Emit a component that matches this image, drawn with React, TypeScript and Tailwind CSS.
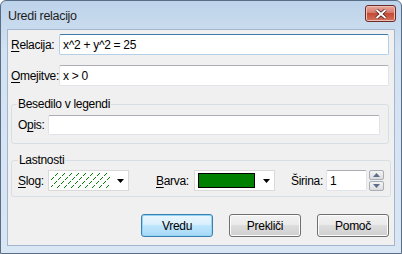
import React from 'react';

function TextBox({ value, focused, className }: { value?: string; focused?: boolean; className?: string }) {
  return (
    <div
      className={`bg-white border rounded-[2px] pl-[3px] flex items-center ${
        focused ? 'border-[#b5cfe7] border-t-[#3d7bad]' : 'border-[#e2e3ea] border-t-[#abadb3]'
      } ${className ?? ''}`}
    >
      <span className="leading-none">{value}</span>
    </div>
  );
}

function Arrow() {
  return (
    <svg width="7" height="4" viewBox="0 0 7 4" className="shrink-0">
      <path d="M0 0H7L3.5 4Z" fill="#000" />
    </svg>
  );
}

// diagonal hatch drawn pixel by pixel so it stays crisp
function Hatch() {
  const dots = [];
  for (let start = -16; start < 59; start += 7) {
    for (let y = 0; y < 16; y++) {
      const x = start + (15 - y);
      if (x < 0 || x >= 59) continue;
      if (y % 4 === 3) continue;
      dots.push(<rect key={`${start}-${y}`} x={x} y={y} width="1" height="1" fill="#008000" />);
    }
  }
  return (
    <svg width="59" height="16" viewBox="0 0 59 16" shapeRendering="crispEdges">
      {dots}
    </svg>
  );
}

function Button({ label, primary }: { label: string; primary?: boolean }) {
  return (
    <div
      className={`w-[72px] h-[23px] rounded-[3px] border flex items-center justify-center ${
        primary
          ? 'border-[#3c7fb1] bg-[linear-gradient(#eaf6fd_0%,#d9f0fc_45%,#bee6fd_50%,#a7d9f5_100%)] shadow-[inset_0_0_0_1px_#8fd5f5]'
          : 'border-[#707070] bg-[linear-gradient(#f2f2f2_0%,#ebebeb_45%,#dddddd_50%,#cfcfcf_100%)] shadow-[inset_0_0_0_1px_#fcfcfc]'
      }`}
    >
      {label}
    </div>
  );
}

function Label({ hot, rest, className }: { hot: string; rest: string; className?: string }) {
  return (
    <span className={className}>
      <span className="underline underline-offset-[2px]">{hot}</span>
      {rest}
    </span>
  );
}

export default function App() {
  return (
    <div className="w-[402px] h-[254px] font-['Liberation_Sans',Arial,sans-serif] text-[12px] tracking-[-0.3px] text-black">
      <div className="w-full h-full flex flex-col rounded-t-[6px] border border-[#5a6d86] bg-[linear-gradient(#bdd3ea,#d3e2f2_20%,#d9e6f4)]">
        <div className="h-[28px] flex items-start shrink-0">
          <span className="ml-[7px] mt-[6px] text-[12.5px] text-[#1e1e1e]">Uredi relacijo</span>
          <div className="ml-auto mr-[5px] mt-[4px] w-[31px] h-[17px] rounded-[3px] border border-[#6b2a2a] bg-[linear-gradient(#e8a89c,#d47a6c_45%,#c44a35_50%,#d2735c)] flex items-center justify-center shadow-[inset_0_0_0_1px_#f0c0b4]">
            <svg width="12" height="10" viewBox="0 0 12 10">
              <path d="M1.5 1L10.5 9M10.5 1L1.5 9" stroke="#4a1a1a" strokeWidth="3.4" />
              <path d="M1.5 1L10.5 9M10.5 1L1.5 9" stroke="#fff" strokeWidth="1.8" />
            </svg>
          </div>
        </div>
        <div className="flex-1 mx-[6px] mb-[7px] bg-[#f0f0f0] border border-[#a3b6cd] flex flex-col pl-[3px] pr-[5px] pt-[4px]">
          <div className="flex items-center h-[21px]">
            <Label hot="R" rest="elacija:" className="w-[48px]" />
            <TextBox value="x^2 + y^2 = 25" focused className="flex-1 h-[21px]" />
          </div>
          <div className="flex items-center h-[21px] mt-[10px]">
            <Label hot="O" rest="mejitve:" className="w-[48px]" />
            <TextBox value="x > 0" className="flex-1 h-[21px]" />
          </div>
          <fieldset className="mt-[11px] border border-[#d5dfe5] rounded-[3px] pl-[5px] pr-[8px] pt-[4px] pb-[8px]">
            <legend className="px-[1px] leading-[14px]">Besedilo v legendi</legend>
            <div className="flex items-center h-[20px]">
              <span className="w-[30px] ml-[1px]">
                O<span className="underline underline-offset-[2px]">p</span>is:
              </span>
              <TextBox className="flex-1 h-[20px]" />
            </div>
          </fieldset>
          <fieldset className="mt-[9px] border border-[#d5dfe5] rounded-[3px] pl-[6px] pr-[6px] pt-[3px] pb-[5px]">
            <legend className="px-[1px] leading-[14px]">Lastnosti</legend>
            <div className="flex items-center h-[21px]">
              <Label hot="S" rest="log:" className="w-[30px]" />
              <div className="w-[81px] h-[21px] bg-white border border-[#d9d9d9] flex items-center pl-[2px] pr-[3px]">
                <Hatch />
                <div className="ml-auto mr-[1px]"><Arrow /></div>
              </div>
              <Label hot="B" rest="arva:" className="ml-[27px] w-[38px]" />
              <div className="w-[81px] h-[21px] bg-white border border-[#d9d9d9] flex items-center pl-[3px] pr-[3px]">
                <div className="w-[57px] h-[15px] bg-[#008000] border border-black" />
                <div className="ml-auto mr-[1px]"><Arrow /></div>
              </div>
              <span className="ml-[16px] w-[35px]">Širina:</span>
              <TextBox value="1" className="w-[41px] h-[21px]" />
              <div className="ml-[2px] w-[15px] h-[21px] flex flex-col gap-[1px]">
                {[0, 1].map((i) => (
                  <div
                    key={i}
                    className="flex-1 rounded-[2px] border border-[#a8aeb6] bg-[linear-gradient(#f4f4f4,#dcdcdc)] flex items-center justify-center"
                  >
                    <svg width="7" height="4" viewBox="0 0 7 4">
                      <path d={i === 0 ? 'M0 4H7L3.5 0Z' : 'M0 0H7L3.5 4Z'} fill="#5a6f8a" />
                    </svg>
                  </div>
                ))}
              </div>
            </div>
          </fieldset>
          <div className="flex justify-end gap-[16px] mt-[17px]">
            <Button label="Vredu" primary />
            <Button label="Prekliči" />
            <Button label="Pomoč" />
          </div>
        </div>
      </div>
    </div>
  );
}
